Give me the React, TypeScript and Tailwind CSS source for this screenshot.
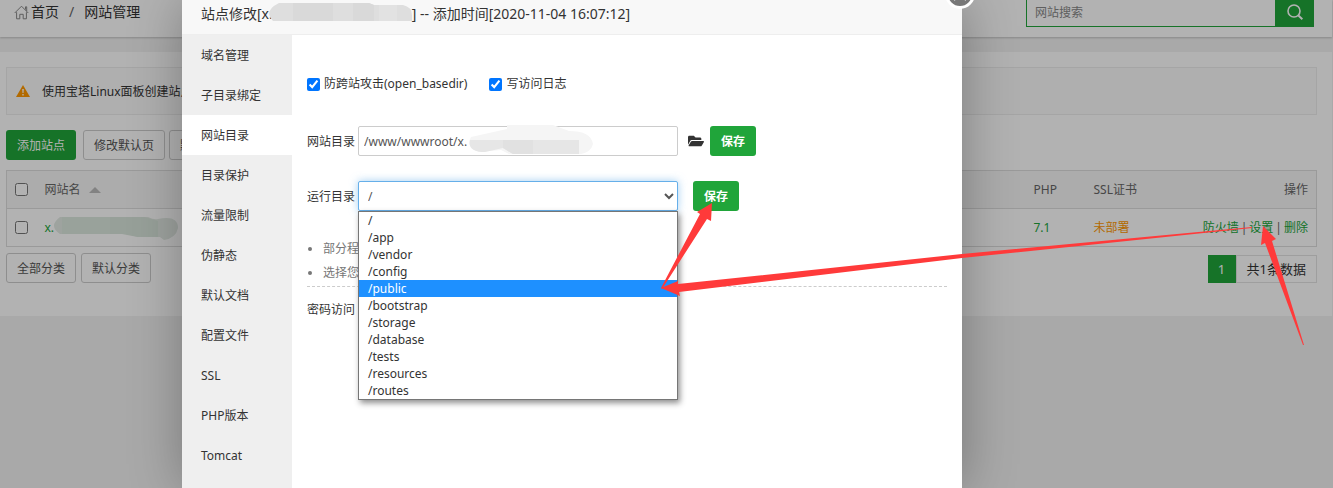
import React from 'react';
import { FaFolderOpen } from 'react-icons/fa';

interface MenuItem {
    label: string;
    active?: boolean;
}

const menu: MenuItem[] = [
    { label: '域名管理' },
    { label: '子目录绑定' },
    { label: '网站目录', active: true },
    { label: '目录保护' },
    { label: '流量限制' },
    { label: '伪静态' },
    { label: '默认文档' },
    { label: '配置文件' },
    { label: 'SSL' },
    { label: 'PHP版本' },
    { label: 'Tomcat' }
];

const directories = [
    '/',
    '/app',
    '/vendor',
    '/config',
    '/public',
    '/bootstrap',
    '/storage',
    '/database',
    '/tests',
    '/resources',
    '/routes'
];

const outlineButton = 'h-[30px] px-2.5 pt-0.5 border border-[#ccc] rounded-[3px] bg-white text-[#555] whitespace-nowrap';
const saveButton = 'h-[30px] px-[11px] pt-0.5 rounded-[3px] bg-[#20a53a] text-white font-bold whitespace-nowrap';

const Header: React.FC = () => (
    <header className="flex justify-between items-start h-[37px] mr-px overflow-hidden bg-white pl-3.5 pr-[18px] shadow-[0_1px_2px_rgba(0,0,0,0.2)]">
        <nav className="flex items-center h-6 text-sm text-[#333]">
            <svg className="w-[15px] h-[15px] mr-0.5 text-[#888]" viewBox="0 0 15 15" fill="none" stroke="currentColor">
                <path d="M0.7 8 L7.5 1.2 L14.3 8" />
                <path d="M11.5 4.5 V1.8 H12.7 V6" />
                <path d="M2.6 7.2 V13.8 H5.8 V9.3 H9.2 V13.8 H12.4 V7.2" />
            </svg>
            <a href="#home">首页</a>
            <span className="px-2.5 text-[#666]">/</span>
            <a href="#sites">网站管理</a>
        </nav>
        <form className="flex h-[27px]">
            <input
                type="text"
                aria-label="网站搜索"
                placeholder="网站搜索"
                className="w-[249px] px-2 bg-white border border-t-0 border-r-0 border-[#20a53a] outline-none placeholder:text-[#888]"
            />
            <button type="button" aria-label="搜索" className="flex items-center justify-center w-[39px] pb-1 bg-[#20a53a] text-white">
                <svg className="w-4 h-4" viewBox="0 0 16 16" fill="none" stroke="currentColor" strokeWidth="1.6">
                    <circle cx="7" cy="7" r="6" />
                    <path d="M11.4 11.4 L15.4 15.2" strokeWidth="2" />
                </svg>
            </button>
        </form>
    </header>
);

const SiteTable: React.FC = () => (
    <table className="w-full border border-[#ddd] border-collapse">
        <thead>
            <tr className="h-[38px] bg-[#f6f6f6] border-b border-[#ddd] text-[#666]">
                <th className="w-[38px] pl-2 text-left">
                    <input type="checkbox" aria-label="全选" className="block w-[13px] h-[13px]" />
                </th>
                <th className="font-normal text-left">
                    <span className="flex items-center gap-2">
                        网站名
                        <svg className="w-3 h-1.5 text-[#bbb]" viewBox="0 0 12 6" fill="currentColor">
                            <path d="M6 0 L12 6 H0 Z" />
                        </svg>
                    </span>
                </th>
                <th className="w-[60px] font-normal text-left">PHP</th>
                <th className="w-[100px] font-normal text-left">SSL证书</th>
                <th className="w-[123px] pr-2 font-normal text-right">操作</th>
            </tr>
        </thead>
        <tbody>
            <tr className="h-[38px] text-[#20a53a]">
                <td className="pl-2">
                    <input type="checkbox" aria-label="选择站点" className="block w-[13px] h-[13px]" />
                </td>
                <td>
                    <span className="flex items-center">
                        <a href="#site">x.</a>
                        <svg className="w-[124px] h-6" viewBox="0 0 124 24">
                            <path d="M6 1 H94 Q100 4 104 3 Q124 -1 124 12 Q122 22 110 24 L106 21 H84 L72 18 H6 Q-6 10 6 1 Z" fill="#e2eae4" />
                            <path d="M8 1 H56 V18 H8 Z" fill="#dce8df" />
                            <path d="M56 1 H90 L104 5 V21 H84 L68 18 H56 Z" fill="#d8e5db" />
                        </svg>
                    </span>
                </td>
                <td>7.1</td>
                <td className="text-[#f90]">
                    <a href="#ssl">未部署</a>
                </td>
                <td className="pr-2 text-right whitespace-nowrap">
                    <a href="#firewall">防火墙</a>
                    <span className="px-0.5 text-[#666]">|</span>
                    <a href="#settings">设置</a>
                    <span className="px-0.5 text-[#666]">|</span>
                    <a href="#delete">删除</a>
                </td>
            </tr>
        </tbody>
    </table>
);

const SiteDialog: React.FC = () => (
    <div role="dialog" aria-label="站点修改" className="relative flex flex-col w-[780px] ml-[182px] bg-white text-[#333] shadow-[1px_1px_50px_rgba(0,0,0,0.3)]">
        <button
            type="button"
            aria-label="关闭"
            className="absolute -top-[21px] -right-[13px] flex items-center justify-center w-[30px] h-[30px] rounded-full border-[3px] border-white bg-[#787878] text-white"
        >
            <svg className="w-3.5 h-3.5" viewBox="0 0 14 14" stroke="currentColor" strokeWidth="2">
                <path d="M1 1 L13 13 M13 1 L1 13" />
            </svg>
        </button>

        <h2 className="flex items-center h-[35px] pl-[19px] pb-1.5 bg-[#f8f8f8] border-b border-[#eee] text-sm whitespace-nowrap">
            站点修改[x.
            <svg className="w-[143px] h-[18px] -ml-1 mb-1" viewBox="0 0 143 18">
                <path d="M10 0 H100 L105 2 H134 Q143 4 143 12 V18 H4 Q-6 8 10 0 Z" fill="#dedede" />
                <path d="M24 0 H64 V18 H24 Z M84 0 H100 L105 2 V18 H84 Z" fill="#d9d9d9" />
                <path d="M110 2 H128 V18 H110 Z" fill="#e2e2e2" />
            </svg>
            ] -- 添加时间[2020-11-04 16:07:12]
        </h2>

        <div className="flex flex-1">
            <nav className="w-[110px] bg-[#efefef]">
                {menu.map((item) => (
                    <a
                        key={item.label}
                        href="#menu"
                        className={item.active ? 'block h-10 pl-[19px] leading-[42px] bg-white' : 'block h-10 pl-[19px] leading-[42px]'}
                    >
                        {item.label}
                    </a>
                ))}
            </nav>

            <div className="flex-1 px-[15px] pt-10">
                <div className="flex items-center gap-[22px] h-[18px]">
                    <label className="flex items-center gap-1">
                        <input type="checkbox" defaultChecked className="w-[13px] h-[13px] accent-[#0075ff]" />
                        防跨站攻击(open_basedir)
                    </label>
                    <label className="flex items-center gap-1">
                        <input type="checkbox" defaultChecked className="w-[13px] h-[13px] accent-[#0075ff]" />
                        写访问日志
                    </label>
                </div>

                {/* Site path */}
                <div className="flex items-center mt-[33px]">
                    <label htmlFor="site-path" className="w-[51px] pt-0.5">网站目录</label>
                    <div className="relative">
                        <input
                            id="site-path"
                            type="text"
                            defaultValue="/www/wwwroot/x."
                            className="block w-80 h-[30px] px-[5px] border border-[#ccc] rounded-[2px] text-[#555] outline-none"
                        />
                        <svg className="absolute -top-px left-[111px] w-[124px] h-[30px]" viewBox="0 0 124 30">
                            <path d="M2 12 L38 4 V0 H84 L100 6 Q122 6 124 19 Q122 27 112 29 H40 L32 25 L10 27 Q-4 22 2 12 Z" fill="#f5f5f5" />
                            <path d="M1 15 H110 V29 H44 L34 23 L16 27 Q-2 27 1 15 Z" fill="#e6e6e6" />
                            <path d="M34 15 H64 V29 H44 L34 23 Z" fill="#e1e1e1" />
                        </svg>
                    </div>
                    <button type="button" aria-label="选择目录" className="ml-2.5 mr-1.5">
                        <FaFolderOpen className="w-4 h-4" />
                    </button>
                    <button type="button" className={saveButton}>保存</button>
                </div>

                {/* Run directory */}
                <div className="flex items-center mt-[25px]">
                    <label htmlFor="run-path" className="w-[51px] pt-0.5">运行目录</label>
                    <div className="relative">
                        <select
                            id="run-path"
                            className="block w-80 h-[30px] px-[5px] border border-[#66afe9] rounded-[2px] bg-white text-[#555] outline-none shadow-[0_0_8px_rgba(102,175,233,0.6)]"
                        >
                            {directories.map((dir) => (
                                <option key={dir}>{dir}</option>
                            ))}
                        </select>
                        <ul className="absolute top-[30px] left-0 z-10 w-80 border border-[#767676] bg-white text-[#333] shadow-[2px_3px_6px_rgba(0,0,0,0.45)]">
                            {directories.map((dir) => (
                                <li
                                    key={dir}
                                    className={dir === '/public' ? 'h-[17px] pl-[9px] leading-[17px] bg-[#1e90ff] text-white' : 'h-[17px] pl-[9px] leading-[17px]'}
                                >
                                    {dir}
                                </li>
                            ))}
                        </ul>
                    </div>
                    <button type="button" className={`${saveButton} ml-[15px]`}>保存</button>
                </div>

                <ul className="mt-[26px] pb-px pl-4 list-disc leading-6 text-[#777] border-b border-dashed border-[#ccc]">
                    <li>部分程序</li>
                    <li>选择您的</li>
                </ul>
                <p className="mt-[15px]">密码访问</p>
            </div>
        </div>
    </div>
);

const App: React.FC = () => {
    return (
        <div className="relative min-h-screen overflow-hidden bg-[#f2f2f2] font-['Noto_Sans','Noto_Sans_CJK_SC',sans-serif] text-xs">
            <Header />

            <main className="mt-[15px] mr-px bg-white pl-1.5 pr-[15px] pt-[15px] pb-[33px]">
                <div className="flex items-center gap-3 h-12 pl-[9px] border border-[#ececec] bg-[#fbfbfb] text-[#333] whitespace-nowrap">
                    <svg className="w-3.5 h-3" viewBox="0 0 14 12">
                        <path d="M7 0 L14 12 H0 Z" fill="#f90" />
                        <path d="M6.2 4 H7.8 L7.5 8 H6.5 Z M6.3 9 H7.7 V10.4 H6.3 Z" fill="#fff" />
                    </svg>
                    <span className="pt-0.5">使用宝塔Linux面板创建站点</span>
                </div>

                <div className="flex gap-1 mt-[15px]">
                    <button type="button" className="h-[30px] px-[11px] pt-0.5 mr-[3px] rounded-[3px] bg-[#20a53a] text-white whitespace-nowrap">
                        添加站点
                    </button>
                    <button type="button" className={outlineButton}>修改默认页</button>
                    <button type="button" className={outlineButton}>默</button>
                </div>

                <div className="mt-2.5">
                    <SiteTable />
                </div>

                <div className="flex justify-between items-start mt-1.5">
                    <div className="flex gap-[5px]">
                        <button type="button" className={outlineButton}>全部分类</button>
                        <button type="button" className={outlineButton}>默认分类</button>
                    </div>
                    <div className="flex mt-0.5 text-[13px] leading-[26px]">
                        <span className="w-7 h-7 border border-[#20a53a] bg-[#20a53a] text-center text-white">1</span>
                        <span className="h-7 px-2.5 border border-[#e2e2e2] text-[#333]">共1条数据</span>
                    </div>
                </div>
            </main>

            {/* Shade and dialog */}
            <div className="absolute inset-0 flex bg-black/30">
                <SiteDialog />
            </div>

            {/* Step arrows */}
            <svg className="absolute top-0 left-0 z-20 w-[1333px] h-[488px] pointer-events-none" viewBox="0 0 1333 488" fill="#ff3a3a">
                <path d="M1263 226 L1276 239 L1272 241 L1304 345 L1303 345 L1265 243 L1261 245 Z" />
                <path d="M661 288 L678 281 L678 284 L962 254 L1252 227 L1252 228 L962 258 L679 292 L680 296 Z" />
                <path d="M661 288 L700 214 L697 212 L712 203 L711 221 L707 219 L662 289 Z" />
            </svg>
        </div>
    );
};

export default App;
